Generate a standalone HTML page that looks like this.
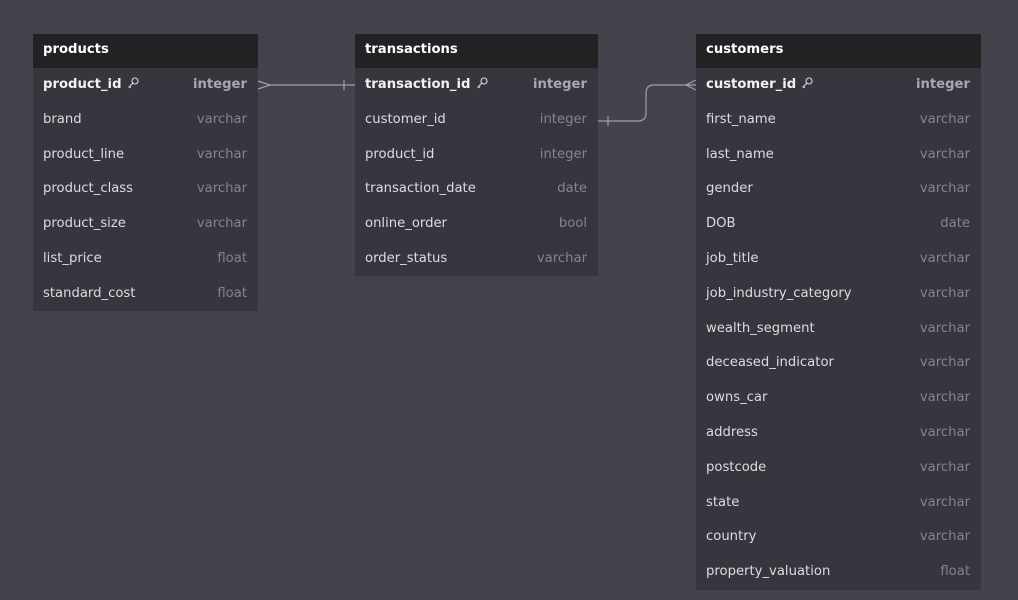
<!DOCTYPE html>
<html><head><style>
html,body{margin:0;padding:0}
body{width:1018px;height:600px;background:#43434b;position:relative;overflow:hidden;font-family:"DejaVu Sans","Liberation Sans",sans-serif;}
.t{position:absolute;background:#36363e;}
.h{height:34px;background:#222224;color:#fff;font-weight:bold;font-size:13.2px;line-height:32px;padding-left:10px;}
.r{height:34.8px;line-height:34.8px;font-size:13.2px;color:#dcdce0;padding:0 11px 0 10px;display:flex;justify-content:space-between;}
.r span:last-child{color:#84848c}
.r.pk{font-weight:bold;color:#f2f2f2}
.r.pk span:last-child{color:#a8a8b0}
.k{display:inline-block;vertical-align:middle;margin-left:5px;margin-top:-3px}
</style></head><body>
<svg width="1018" height="600" style="position:absolute;left:0;top:0">
<g stroke="#a0a0a8" stroke-width="1.2" fill="none">
<path d="M258 81 L270 85 L258 89"/>
<path d="M270 85 L355 85"/><path d="M344 80 L344 90"/>
<path d="M598 121 L638 121 Q646 121 646 113 L646 93 Q646 85 654 85 L696 85"/>
<path d="M608 116 L608 126"/>
<path d="M696 80 L686 85 L696 90"/>
</g></svg>
<div class="t" style="left:33px;top:34px;width:225px;height:277px">
<div class="h">products</div>
<div class="r pk"><span>product_id<svg class="k" width="12" height="12" viewBox="0 0 12 12"><g fill="none" stroke="#ddd" stroke-width="1.1"><circle cx="8" cy="4" r="3"/><path d="M6 6 L1.5 10.5 M2.5 9.5 L3.8 10.8"/></g></svg></span><span>integer</span></div>
<div class="r"><span>brand</span><span>varchar</span></div>
<div class="r"><span>product_line</span><span>varchar</span></div>
<div class="r"><span>product_class</span><span>varchar</span></div>
<div class="r"><span>product_size</span><span>varchar</span></div>
<div class="r"><span>list_price</span><span>float</span></div>
<div class="r"><span>standard_cost</span><span>float</span></div>
</div>
<div class="t" style="left:355px;top:34px;width:243px;height:242px">
<div class="h">transactions</div>
<div class="r pk"><span>transaction_id<svg class="k" width="12" height="12" viewBox="0 0 12 12"><g fill="none" stroke="#ddd" stroke-width="1.1"><circle cx="8" cy="4" r="3"/><path d="M6 6 L1.5 10.5 M2.5 9.5 L3.8 10.8"/></g></svg></span><span>integer</span></div>
<div class="r"><span>customer_id</span><span>integer</span></div>
<div class="r"><span>product_id</span><span>integer</span></div>
<div class="r"><span>transaction_date</span><span>date</span></div>
<div class="r"><span>online_order</span><span>bool</span></div>
<div class="r"><span>order_status</span><span>varchar</span></div>
</div>
<div class="t" style="left:696px;top:34px;width:285px;height:556px">
<div class="h">customers</div>
<div class="r pk"><span>customer_id<svg class="k" width="12" height="12" viewBox="0 0 12 12"><g fill="none" stroke="#ddd" stroke-width="1.1"><circle cx="8" cy="4" r="3"/><path d="M6 6 L1.5 10.5 M2.5 9.5 L3.8 10.8"/></g></svg></span><span>integer</span></div>
<div class="r"><span>first_name</span><span>varchar</span></div>
<div class="r"><span>last_name</span><span>varchar</span></div>
<div class="r"><span>gender</span><span>varchar</span></div>
<div class="r"><span>DOB</span><span>date</span></div>
<div class="r"><span>job_title</span><span>varchar</span></div>
<div class="r"><span>job_industry_category</span><span>varchar</span></div>
<div class="r"><span>wealth_segment</span><span>varchar</span></div>
<div class="r"><span>deceased_indicator</span><span>varchar</span></div>
<div class="r"><span>owns_car</span><span>varchar</span></div>
<div class="r"><span>address</span><span>varchar</span></div>
<div class="r"><span>postcode</span><span>varchar</span></div>
<div class="r"><span>state</span><span>varchar</span></div>
<div class="r"><span>country</span><span>varchar</span></div>
<div class="r"><span>property_valuation</span><span>float</span></div>
</div>
</body></html>
